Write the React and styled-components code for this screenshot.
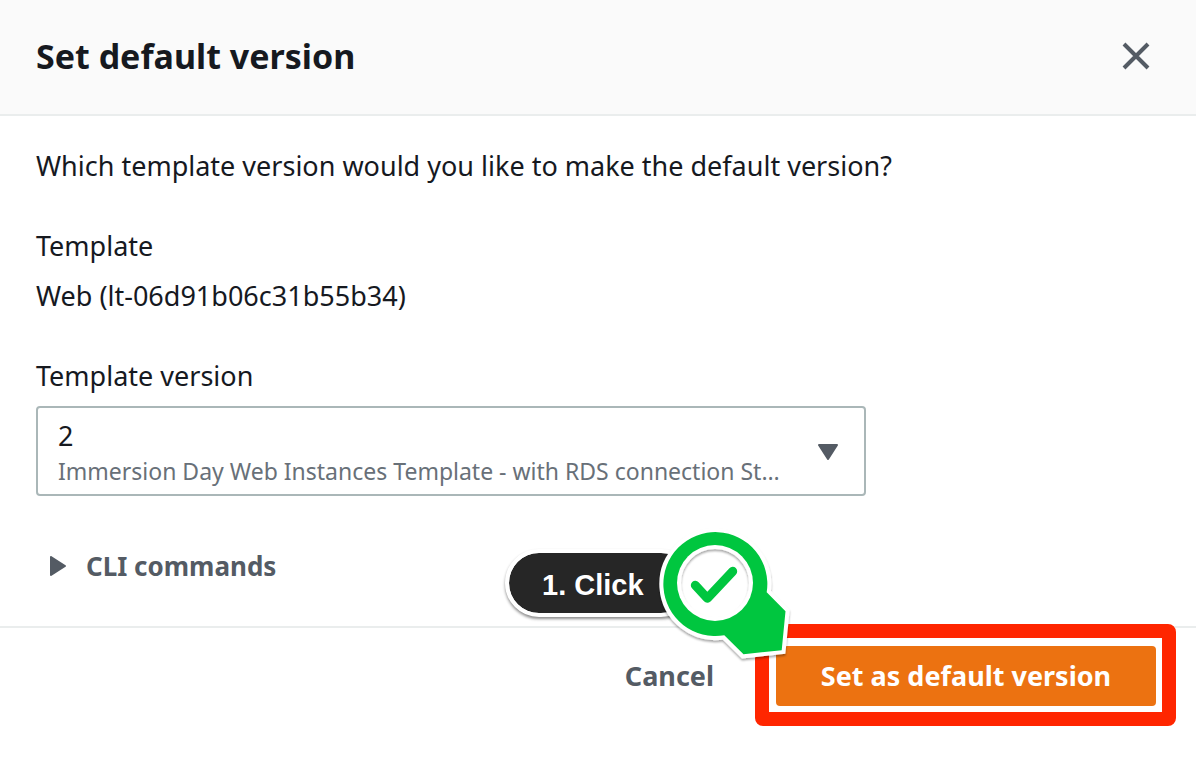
import React from "react";
import styled, { createGlobalStyle } from "styled-components";

const sans = '"Amazon Ember", "Noto Sans", "Open Sans", sans-serif';

const GlobalStyle = createGlobalStyle`
  * { box-sizing: border-box; }
  body {
    margin: 0;
    background: #fff;
    color: #16191f;
    font-family: ${sans};
    font-size: 27px;
    line-height: 40px;
  }
`;

const Dialog = styled.section`
  display: flex;
  flex-direction: column;
`;

const Header = styled.header`
  display: flex;
  align-items: center;
  justify-content: space-between;
  padding: 31px 46px 33px 36px;
  background: #fafafa;
  border-bottom: 2px solid #eaeded;
`;

const Title = styled.h2`
  margin: 0;
  font-size: 34px;
  line-height: 50px;
  font-weight: 700;
`;

const IconButton = styled.button`
  display: flex;
  padding: 0;
  border: 0;
  background: none;
  color: #545b64;
  cursor: pointer;
`;

const Content = styled.div`
  display: flex;
  flex-direction: column;
  gap: 40px;
  padding: 30px 36px 40px;
`;

const Question = styled.p`
  margin: 0;
`;

const Field = styled.div`
  display: flex;
  flex-direction: column;
  gap: 10px;
`;

const SelectBox = styled.div`
  display: grid;
  grid-template-columns: minmax(0, 1fr) auto;
  align-items: center;
  max-width: 830px;
  height: 90px;
  border: 2px solid #aab7b8;
  border-radius: 4px;
  color: #545b64;
`;

const Select = styled.select`
  grid-area: 1 / 1 / 2 / 3;
  width: 100%;
  height: 86px;
  padding: 8px 20px 38px;
  border: 0;
  background: none;
  appearance: none;
  color: #16191f;
  font: inherit;
`;

const SelectDescription = styled.span`
  grid-area: 1 / 1;
  align-self: end;
  padding: 0 0 3px 20px;
  overflow: hidden;
  white-space: nowrap;
  text-overflow: ellipsis;
  color: #687078;
  font-size: 23px;
  pointer-events: none;
`;

const Caret = styled.svg`
  grid-area: 1 / 2;
  margin: 2px 26px 0;
  pointer-events: none;
`;

const ExpandButton = styled.button`
  display: flex;
  align-items: center;
  align-self: flex-start;
  gap: 20px;
  margin-top: 10px;
  padding: 0 14px;
  border: 0;
  background: none;
  color: #545b64;
  font: inherit;
  font-size: 26px;
  font-weight: 700;
  cursor: pointer;
`;

const Footer = styled.footer`
  display: flex;
  justify-content: flex-end;
  gap: 22px;
  padding: 18px 40px 62px;
  border-top: 2px solid #eaeded;
`;

const Button = styled.button`
  height: 60px;
  padding: 0 40px;
  border: 0;
  border-radius: 4px;
  background: ${(p) => (p.$primary ? "#ec7211" : "transparent")};
  color: ${(p) => (p.$primary ? "#fff" : "#545b64")};
  font: inherit;
  font-weight: 700;
  white-space: nowrap;
  cursor: pointer;
`;

const Highlight = styled.div`
  position: relative;
  display: grid;
  width: 380px;

  &::after {
    content: "";
    position: absolute;
    inset: -22px -20px -20px -21px;
    border: 14px solid #ff2600;
    border-radius: 8px;
    pointer-events: none;
  }
`;

const Callout = styled.div`
  position: absolute;
  z-index: 1;
  top: -120px;
  left: -276px;
  width: 296px;
  height: 140px;
  padding: 23px 0 0 5px;
  pointer-events: none;
`;

const CalloutLabel = styled.div`
  width: 190px;
  height: 68px;
  padding-left: 33px;
  border: 4px solid #fff;
  border-radius: 34px;
  background: #262626;
  background-clip: padding-box;
  box-shadow: 0 2px 3px rgba(0, 0, 0, 0.45);
  color: #fff;
  font: 700 29px/64px "Helvetica Neue", "Liberation Sans", Arial, sans-serif;
`;

const Magnifier = styled.svg`
  position: absolute;
  top: 0;
  right: 0;
`;

function CheckMagnifier() {
  const shape =
    "M266.7 66.3 A52 52 0 1 0 224.3 109.3 L243.5 128.3 L281.7 124.2 L285.5 85.2 Z";
  return (
    <Magnifier width="140" height="140" viewBox="156 0 140 140" aria-hidden="true">
      <defs>
        <filter id="drop" x="-20%" y="-20%" width="140%" height="140%">
          <feDropShadow dx="0" dy="2" stdDeviation="1" floodOpacity="0.35" />
        </filter>
        <clipPath id="lens">
          <circle cx="215" cy="57" r="35" />
        </clipPath>
      </defs>
      <path d={shape} fill="#fff" stroke="#fff" strokeWidth="8" filter="url(#drop)" />
      <path d={shape} fill="#00c63f" />
      <circle cx="215" cy="57" r="38" fill="#fff" />
      <g clipPath="url(#lens)">
        <circle cx="215" cy="57" r="36" fill="none" stroke="#fff" strokeWidth="4" filter="url(#drop)" />
      </g>
      <path
        d="M195.3 59.3 L207.3 72.3 L232.7 45.3"
        fill="none"
        stroke="#00c63f"
        strokeWidth="9"
        strokeLinecap="round"
        strokeLinejoin="round"
      />
    </Magnifier>
  );
}

export default function App() {
  return (
    <>
      <GlobalStyle />
      <Dialog role="dialog" aria-labelledby="dialog-title">
        <Header>
          <Title id="dialog-title">Set default version</Title>
          <IconButton type="button" aria-label="Close">
            <svg width="28" height="28" viewBox="0 0 28 28" aria-hidden="true">
              <path d="M2 2 L26 26 M26 2 L2 26" stroke="currentColor" strokeWidth="4" />
            </svg>
          </IconButton>
        </Header>
        <Content>
          <Question>Which template version would you like to make the default version?</Question>
          <Field>
            <span>Template</span>
            <span>Web (lt-06d91b06c31b55b34)</span>
          </Field>
          <Field>
            <label htmlFor="version">Template version</label>
            <SelectBox>
              <Select id="version" aria-describedby="version-description" defaultValue="2">
                <option value="2">2</option>
              </Select>
              <SelectDescription id="version-description">
                Immersion Day Web Instances Template - with RDS connection St…
              </SelectDescription>
              <Caret width="20" height="16" viewBox="0 0 20 16" aria-hidden="true">
                <path d="M1 1 H19 L10 15 Z" fill="currentColor" stroke="currentColor" strokeWidth="2" strokeLinejoin="round" />
              </Caret>
            </SelectBox>
          </Field>
          <ExpandButton type="button" aria-expanded="false">
            <svg width="16" height="20" viewBox="0 0 16 20" aria-hidden="true">
              <path d="M1 1 V19 L15 10 Z" fill="currentColor" stroke="currentColor" strokeWidth="2" strokeLinejoin="round" />
            </svg>
            CLI commands
          </ExpandButton>
        </Content>
        <Footer>
          <Button type="button">Cancel</Button>
          <Highlight>
            <Button type="button" $primary>Set as default version</Button>
            <Callout>
              <CalloutLabel>1. Click</CalloutLabel>
              <CheckMagnifier />
            </Callout>
          </Highlight>
        </Footer>
      </Dialog>
    </>
  );
}
